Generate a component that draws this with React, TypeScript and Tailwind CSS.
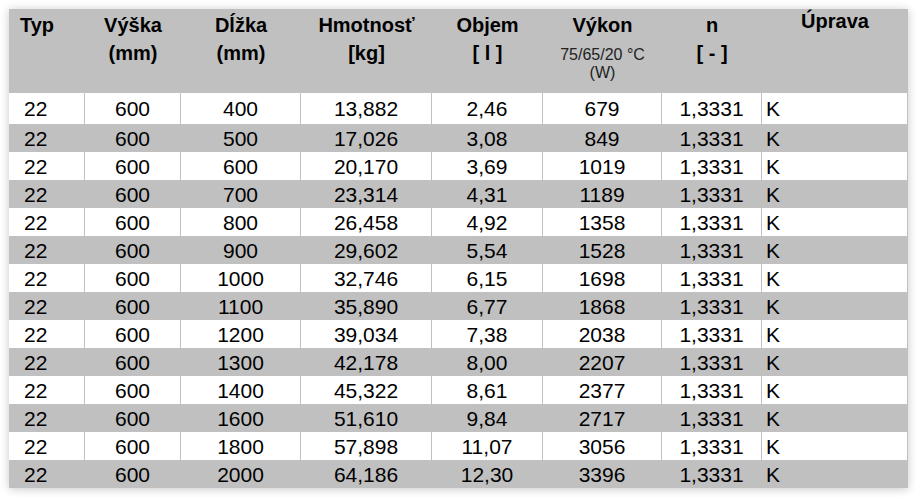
import React from "react";

const rows: string[][] = [
  ["22", "600", "400", "13,882", "2,46", "679", "1,3331", "K"],
  ["22", "600", "500", "17,026", "3,08", "849", "1,3331", "K"],
  ["22", "600", "600", "20,170", "3,69", "1019", "1,3331", "K"],
  ["22", "600", "700", "23,314", "4,31", "1189", "1,3331", "K"],
  ["22", "600", "800", "26,458", "4,92", "1358", "1,3331", "K"],
  ["22", "600", "900", "29,602", "5,54", "1528", "1,3331", "K"],
  ["22", "600", "1000", "32,746", "6,15", "1698", "1,3331", "K"],
  ["22", "600", "1100", "35,890", "6,77", "1868", "1,3331", "K"],
  ["22", "600", "1200", "39,034", "7,38", "2038", "1,3331", "K"],
  ["22", "600", "1300", "42,178", "8,00", "2207", "1,3331", "K"],
  ["22", "600", "1400", "45,322", "8,61", "2377", "1,3331", "K"],
  ["22", "600", "1600", "51,610", "9,84", "2717", "1,3331", "K"],
  ["22", "600", "1800", "57,898", "11,07", "3056", "1,3331", "K"],
  ["22", "600", "2000", "64,186", "12,30", "3396", "1,3331", "K"],
];

const gridCols = "grid grid-cols-[76px_96px_120px_131px_111px_119px_100px_146px]";

function HeadCell({ lines }: { lines: string[] }) {
  return (
    <div className="flex flex-col items-center pt-[2px] leading-[28px]">
      {lines.map((l, i) => (
        <span key={i}>{l}</span>
      ))}
    </div>
  );
}

export default function App() {
  return (
    <div
      className="w-[916px] h-[497px] bg-white pl-[9px] pt-[9px] text-black"
      style={{ fontFamily: '"Liberation Sans", Arial, sans-serif' }}
    >
      <div className="w-[899px] bg-white shadow-[0_1px_9px_rgba(0,0,0,0.22)]">
        <div className={`${gridCols} h-[84px] bg-[#c0c0c0] text-[20px] font-bold`}>
          <div className="pt-[2px] pl-[11px] leading-[28px]">Typ</div>
          <HeadCell lines={["Výška", "(mm)"]} />
          <HeadCell lines={["Dĺžka", "(mm)"]} />
          <HeadCell lines={["Hmotnosť", "[kg]"]} />
          <HeadCell lines={["Objem", "[ l ]"]} />
          <div className="flex flex-col items-center pt-[2px]">
            <span className="leading-[28px]">Výkon</span>
            <span className="mt-[7px] text-[16px] leading-[18px] font-normal text-[#222]">75/65/20 °C</span>
            <span className="text-[16px] leading-[18px] font-normal text-[#222]">(W)</span>
          </div>
          <HeadCell lines={["n", "[ - ]"]} />
          <div className="flex flex-col items-center leading-[24px]">Úprava</div>
        </div>
        {rows.map((r, ri) => (
          <div
            key={ri}
            className={`${gridCols} ${ri === 0 ? "h-[31px]" : "h-[28px]"} ${
              ri % 2 === 0 ? "bg-white" : "bg-[#c0c0c0]"
            } text-[21px] leading-none`}
          >
            {r.map((c, ci) => (
              <div
                key={ci}
                className={`flex items-center border-r border-[#c0c0c0] ${
                  ci === 0
                    ? "justify-start pl-[15px]"
                    : ci === 7
                    ? "justify-start pl-[4px]"
                    : "justify-center"
                }`}
              >
                {c}
              </div>
            ))}
          </div>
        ))}
      </div>
    </div>
  );
}
